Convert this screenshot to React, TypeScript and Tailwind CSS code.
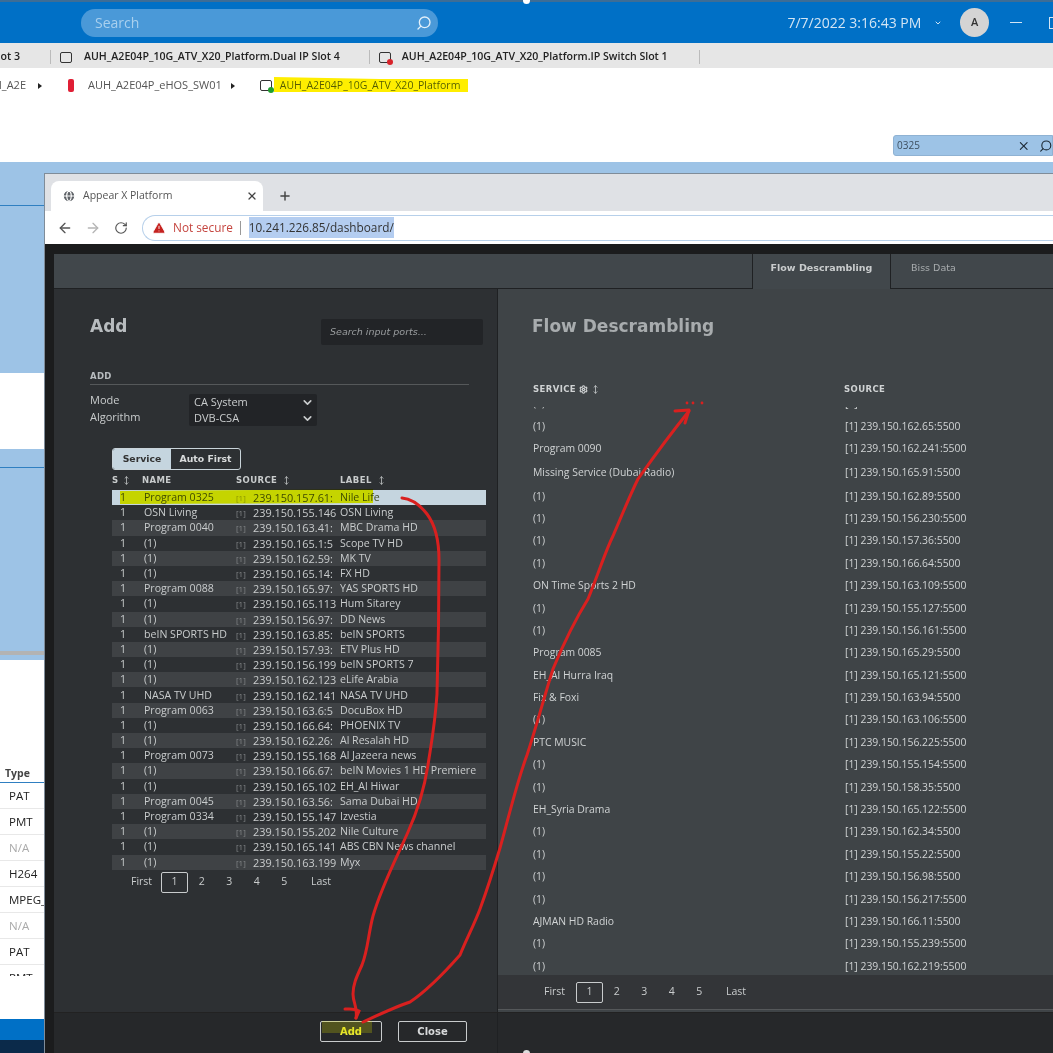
import React from "react";
import { ArrowLeft, ArrowRight, Globe, MoveVertical, Plus, RotateCw, Search, Settings, TriangleAlert, X, ChevronDown } from "lucide-react";

const leftRows = [
  ["Program 0325", "239.150.157.61:", "Nile Life"],
  ["OSN Living", "239.150.155.146", "OSN Living"],
  ["Program 0040", "239.150.163.41:", "MBC Drama HD"],
  ["(1)", "239.150.165.1:5", "Scope TV HD"],
  ["(1)", "239.150.162.59:", "MK TV"],
  ["(1)", "239.150.165.14:", "FX HD"],
  ["Program 0088", "239.150.165.97:", "YAS SPORTS HD"],
  ["(1)", "239.150.165.113", "Hum Sitarey"],
  ["(1)", "239.150.156.97:", "DD News"],
  ["beIN SPORTS HD", "239.150.163.85:", "beIN SPORTS"],
  ["(1)", "239.150.157.93:", "ETV Plus HD"],
  ["(1)", "239.150.156.199", "beIN SPORTS 7"],
  ["(1)", "239.150.162.123", "eLife Arabia"],
  ["NASA TV UHD", "239.150.162.141", "NASA TV UHD"],
  ["Program 0063", "239.150.163.6:5", "DocuBox HD"],
  ["(1)", "239.150.166.64:", "PHOENIX TV"],
  ["(1)", "239.150.162.26:", "Al Resalah HD"],
  ["Program 0073", "239.150.155.168", "Al Jazeera news"],
  ["(1)", "239.150.166.67:", "beIN Movies 1 HD Premiere"],
  ["(1)", "239.150.165.102", "EH_Al Hiwar"],
  ["Program 0045", "239.150.163.56:", "Sama Dubai HD"],
  ["Program 0334", "239.150.155.147", "Izvestia"],
  ["(1)", "239.150.155.202", "Nile Culture"],
  ["(1)", "239.150.165.141", "ABS CBN News channel"],
  ["(1)", "239.150.163.199", "Myx"],
];

const rightRows = [
  ["(1)", "163.43"],
  ["(1)", "162.65"],
  ["Program 0090", "162.241"],
  ["Missing Service (Dubai Radio)", "165.91"],
  ["(1)", "162.89"],
  ["(1)", "156.230"],
  ["(1)", "157.36"],
  ["(1)", "166.64"],
  ["ON Time Sports 2 HD", "163.109"],
  ["(1)", "155.127"],
  ["(1)", "156.161"],
  ["Program 0085", "165.29"],
  ["EH_Al Hurra Iraq", "165.121"],
  ["Fix & Foxi", "163.94"],
  ["(1)", "163.106"],
  ["PTC MUSIC", "156.225"],
  ["(1)", "155.154"],
  ["(1)", "158.35"],
  ["EH_Syria Drama", "165.122"],
  ["(1)", "162.34"],
  ["(1)", "155.22"],
  ["(1)", "156.98"],
  ["(1)", "156.217"],
  ["AJMAN HD Radio", "166.11"],
  ["(1)", "155.239"],
  ["(1)", "162.219"],
];

const typeRows = ["PAT", "PMT", "N/A", "H264", "MPEG_A", "N/A", "PAT"];

function Pager({ gaps, first }: { gaps: string; first: string }) {
  return (
    <div className={`flex items-center text-[10.5px] font-medium text-[#c9cccd] ${gaps}`}>
      <span className={first}>First</span>
      <span className="flex h-[21px] w-[27px] items-center justify-center rounded-[2px] border border-[#c9cccd]">1</span>
      <span className="w-[27.5px] text-center">2</span>
      <span className="w-[27.5px] text-center">3</span>
      <span className="w-[27.5px] text-center">4</span>
      <span className="w-[27.5px] text-center">5</span>
      <span className="ml-[13px]">Last</span>
    </div>
  );
}

function Device({ dot }: { dot?: string }) {
  return (
    <span className="relative inline-block h-[11px] w-[12px] shrink-0 rounded-[2px] border border-[#333]">
      {dot && <span className={`absolute -bottom-[3px] -right-[3px] h-[6px] w-[6px] rounded-full ${dot}`} />}
    </span>
  );
}

export default function App() {
  return (
    <div className="relative flex h-[1053px] w-[1053px] flex-col overflow-hidden bg-white font-['Open_Sans',sans-serif]">
      {/* Top bar */}
      <div className="flex h-[43px] shrink-0 items-center border-t-2 border-[#3d6d96] bg-[#0070c6]">
        <div className="ml-[81px] flex h-[28px] w-[358px] items-center justify-between rounded-full bg-[#4a99d8] pl-[14px] pr-[6px] text-[14px] text-[#a9d0ee]">
          <span>Search</span>
          <Search size={16} className="-scale-x-100 text-[#e3f0fa]" />
        </div>
        <span className="ml-[349px] w-[147px] text-[14px] text-[#d3e5f4]">7/7/2022 3:16:43 PM</span>
        <ChevronDown size={8} strokeWidth={3} className="text-[#d3e5f4]" />
        <span className="ml-[18px] flex h-[29px] w-[29px] items-center justify-center rounded-full bg-[#d4d4d4] text-[11px] font-semibold text-[#333]">A</span>
        <span className="ml-[21px] h-[1px] w-[12px] bg-[#d3e5f4]" />
        <span className="ml-[27px] h-[12px] w-[4px] border-y border-l border-[#d3e5f4]" />
      </div>

      {/* Tab strip */}
      <div className="flex h-[25px] shrink-0 items-center overflow-hidden bg-[#e6e6e6] pt-[3px] text-[10.6px] font-semibold text-[#222]">
        <span className="w-[50px] shrink-0 pr-[30px] text-right whitespace-nowrap">ot 3</span>
        <span className="h-[14px] w-px shrink-0 bg-[#bbb]" />
        <span className="ml-[9px] flex"><Device /></span>
        <span className="ml-[12px] whitespace-nowrap">AUH_A2E04P_10G_ATV_X20_Platform.Dual IP Slot 4</span>
        <span className="ml-[29px] h-[14px] w-px shrink-0 bg-[#bbb]" />
        <span className="ml-[9px] flex"><Device dot="bg-[#d8232a]" /></span>
        <span className="ml-[11px] whitespace-nowrap">AUH_A2E04P_10G_ATV_X20_Platform.IP Switch Slot 1</span>
        <span className="ml-[31px] h-[14px] w-px shrink-0 bg-[#bbb]" />
      </div>

      {/* Breadcrumb area */}
      <div className="flex h-[94px] shrink-0 flex-col bg-white">
        <div className="flex h-[35px] items-center text-[11px] text-[#555]">
          <span className="w-[26px] overflow-hidden whitespace-nowrap text-right [direction:rtl]">H_A2E</span>
          <span className="ml-[12px] h-0 w-0 border-y-[3px] border-l-[4px] border-y-transparent border-l-[#222]" />
          <span className="ml-[26px] h-[13px] w-[6px] rounded-[2px] bg-[#e01f35]" />
          <span className="ml-[14px] whitespace-nowrap">AUH_A2E04P_eHOS_SW01</span>
          <span className="ml-[9px] h-0 w-0 border-y-[3px] border-l-[4px] border-y-transparent border-l-[#222]" />
          <span className="ml-[25px] flex"><Device dot="bg-[#1e9e2e]" /></span>
          <span className="ml-[8px] whitespace-nowrap text-[10.5px] text-[#5a5a20]">AUH_A2E04P_10G_ATV_X20_Platform</span>
        </div>
        <div className="ml-[893px] mt-[32px] flex h-[21px] items-center rounded-l-[3px] border border-[#8fb2d3] bg-[#9dc3e6] pl-[3px] text-[10px] text-[#3d4f5f]">
          <span className="w-[125px]">0325</span>
          <X size={14} className="text-[#1d2a35]" />
          <Search size={14} className="ml-[8px] -scale-x-100 text-[#1d2a35]" />
        </div>
      </div>

      {/* Desktop lower */}
      <div className="flex min-h-0 flex-1 flex-col bg-[#9dc3e6]">
        <div className="h-[11px] shrink-0" />
        <div className="flex min-h-0 flex-1">
          {/* Underlying page, left sliver */}
          <div className="flex w-[44px] shrink-0 flex-col">
            <div className="h-[33px] shrink-0 border-b border-[#2f7fc1]" />
            <div className="h-[167px] shrink-0" />
            <div className="h-[76px] shrink-0 bg-white" />
            <div className="h-[19px] shrink-0 border-b border-[#2f7fc1]" />
            <div className="h-[183px] shrink-0" />
            <div className="h-[4px] shrink-0 bg-[#b3b3b3]" />
            <div className="h-[5px] shrink-0" />
            <div className="flex min-h-0 flex-1 flex-col bg-white text-[11.5px] text-[#222]">
              <div className="h-[123px] shrink-0 border-b border-[#2f7fc1] pl-[5px] pt-[106px] text-[10.5px] font-bold leading-[14px] text-[#444]">Type</div>
              {typeRows.map((t, i) => (
                <div key={i} className={`flex h-[26px] shrink-0 items-center overflow-hidden whitespace-nowrap border-b border-[#e8e8e8] pl-[9px] ${t === "N/A" ? "text-[#aaa]" : ""}`}>{t}</div>
              ))}
              <div className="h-[11px] shrink-0 overflow-hidden whitespace-nowrap pl-[9px] leading-[26px]">PMT</div>
              <div className="flex-1" />
              <div className="h-[21px] shrink-0 bg-[#0070c6]" />
              <div className="h-[13px] shrink-0 bg-[#0b2a4a]" />
            </div>
          </div>

          {/* Browser window */}
          <div className="flex min-w-0 flex-1 flex-col overflow-hidden border-l border-t border-[#7f8c99]">
            <div className="flex h-[37px] shrink-0 items-end bg-[#dfe1e5] pl-[6px]">
              <div className="flex h-[30px] w-[212px] items-center rounded-t-[8px] bg-white pl-[11px] text-[10.5px] text-[#555]">
                <Globe size={14} fill="#5f6368" className="text-white" />
                <span className="ml-[7px] w-[163px]">Appear X Platform</span>
                <X size={12} strokeWidth={2.5} className="text-[#444]" />
              </div>
              <Plus size={14} strokeWidth={2.5} className="mb-[8px] ml-[15px] text-[#444]" />
            </div>
            <div className="flex h-[33px] shrink-0 items-center bg-white pl-[12px]">
              <ArrowLeft size={16} className="text-[#555]" />
              <ArrowRight size={16} className="ml-[12px] text-[#b5b5b5]" />
              <RotateCw size={14} className="ml-[13px] text-[#555]" />
              <div className="ml-[14px] flex h-[26px] min-w-0 flex-1 items-center rounded-l-full border border-r-0 border-[#b7d0ea] pl-[9px] text-[11.8px] whitespace-nowrap">
                <TriangleAlert size={14} fill="#c5221f" stroke="#fff" strokeWidth={1.5} />
                <span className="ml-[7px] text-[#c5453f]">Not secure</span>
                <span className="ml-[7px] h-[14px] w-px bg-[#999]" />
                <span className="ml-[8px] bg-[#b4cdf0] py-[2px] text-[#333]">10.241.226.85/dashboard/</span>
              </div>
            </div>

            {/* Dark frame */}
            <div className="flex min-h-0 flex-1 flex-col bg-[#1b1c1d] pl-[9px] pt-[10px]">
              <div className="flex h-[35px] shrink-0 bg-[#41474b] text-[9.5px] font-bold">
                <div className="w-[698px] border-b border-[#1f2123]" />
                <div className="flex w-[139px] items-start justify-center border-l border-r border-[#1f2123] pt-[7px] text-[#c9cccd] font-['DejaVu_Sans',sans-serif]">Flow Descrambling</div>
                <div className="flex-1 border-b border-[#1f2123] pl-[20px] pt-[7px] font-normal text-[#a8acae] font-['DejaVu_Sans',sans-serif]">Biss Data</div>
              </div>

              <div className="flex min-h-0 flex-1">
                {/* Left panel */}
                <div className="flex w-[444px] shrink-0 flex-col border-r border-[#1f2123] bg-[#2d3033] text-[#c9cccd]">
                  <div className="flex h-[78px] shrink-0 pl-[36px]">
                    <h2 className="mt-[26px] w-[231px] text-[17px] leading-[22px] font-bold text-[#b8bcbf] font-['DejaVu_Sans',sans-serif]">Add</h2>
                    <div className="mt-[30px] flex h-[26px] w-[162px] items-center rounded-[2px] bg-[#222427] pl-[9px] pt-[1px] text-[9.5px] italic text-[#9a9d9f] font-['DejaVu_Sans',sans-serif]">Search input ports...</div>
                  </div>
                  <div className="ml-[36px] mr-[28px] h-[18px] border-b border-[#55585a] pt-[3px] text-[8.5px] font-bold leading-[12px] tracking-[0.3px] text-[#b8bcbf] font-['DejaVu_Sans',sans-serif]">ADD</div>
                  <div className="ml-[36px] mt-[8px] flex text-[11px] font-medium text-[#c9cccd]">
                    <div className="-mt-[2px] w-[99px] leading-[17px]">
                      <div>Mode</div>
                      <div>Algorithm</div>
                    </div>
                    <div className="mt-[1px] flex h-[32px] w-[128px] flex-col justify-center rounded-[2px] bg-[#222427] pl-[5px] pr-[3px] leading-[16px]">
                      <div className="flex items-center justify-between">CA System<ChevronDown size={13} strokeWidth={3} /></div>
                      <div className="flex items-center justify-between">DVB-CSA<ChevronDown size={13} strokeWidth={3} /></div>
                    </div>
                  </div>
                  <div className="ml-[58px] mt-[22px] flex h-[22px] w-[129px] shrink-0 overflow-hidden rounded-[3px] border border-[#c9d4da] text-[9.3px] font-bold font-['DejaVu_Sans',sans-serif]">
                    <div className="flex w-[58px] items-center justify-center bg-[#c5d5df] text-[#333]">Service</div>
                    <div className="flex flex-1 items-center justify-center text-[#d8dadb]">Auto First</div>
                  </div>
                  <div className="ml-[58px] mt-[3px] flex h-[15px] shrink-0 items-center text-[8.5px] font-bold tracking-[0.4px] text-[#c9cccd] font-['DejaVu_Sans',sans-serif]">
                    <span className="flex w-[30px] items-center gap-[3px]">S<MoveVertical size={9} /></span>
                    <span className="w-[94px]">NAME</span>
                    <span className="flex w-[104px] items-center gap-[5px]">SOURCE<MoveVertical size={9} /></span>
                    <span className="flex items-center gap-[5px]">LABEL<MoveVertical size={9} /></span>
                  </div>
                  <div className="ml-[58px] mt-[2px] w-[374px] shrink-0 text-[10.6px] font-medium">
                    {leftRows.map((r, i) => (
                      <div key={i} className={`flex h-[15.2px] items-center whitespace-nowrap leading-[15px] ${i === 0 ? "bg-[#c5d5df] text-[#3f4a22]" : i % 2 === 0 ? "bg-[#3f4245]" : ""}`}>
                        <span className="w-[32px] shrink-0 pl-[8px]">1</span>
                        <span className="w-[92px] shrink-0">{r[0]}</span>
                        <span className={`w-[17px] shrink-0 text-[8px] ${i === 0 ? "text-[#8a9440]" : "text-[#85888a]"}`}>[1]</span>
                        <span className="w-[87px] shrink-0 overflow-hidden text-[10.9px]">{r[1]}</span>
                        <span>{r[2]}</span>
                      </div>
                    ))}
                  </div>
                  <Pager gaps="ml-[77px] mt-[2px]" first="w-[30px]" />
                </div>

                {/* Right panel */}
                <div className="flex min-w-0 flex-1 flex-col bg-[#3f4447] text-[#d0d3d4]">
                  <div className="h-[78px] shrink-0 pl-[34px] pt-[26px] text-[17px] leading-[22px] font-bold text-[#a8acae] font-['DejaVu_Sans',sans-serif] whitespace-nowrap">Flow Descrambling</div>
                  <div className="flex h-[40px] shrink-0 items-center pt-[4px] pl-[35px] text-[8.5px] font-bold tracking-[0.4px] text-[#d0d3d4] font-['DejaVu_Sans',sans-serif]">
                    <span className="flex w-[311px] items-center gap-[3px]">SERVICE<Settings size={9} strokeWidth={3} /><MoveVertical size={9} /></span>
                    <span>SOURCE</span>
                  </div>
                  <div className="h-[568px] shrink-0 overflow-hidden text-[10.4px] font-medium">
                    <div className="-mt-[14px]">
                      {rightRows.map((r, i) => (
                        <div key={i} className={`flex items-center pl-[35px] whitespace-nowrap ${i === 3 ? "h-[25px]" : "h-[22.4px]"}`}>
                          <span className="w-[312px] shrink-0">{r[0]}</span>
                          <span>[1] 239.150.{r[1]}:5500</span>
                        </div>
                      ))}
                    </div>
                  </div>
                  <div className="flex h-[35px] shrink-0 items-center border-b border-[#55585a] bg-[#333538] pl-[46px]">
                    <Pager gaps="" first="w-[32px]" />
                  </div>
                </div>
              </div>

              {/* Footer */}
              <div className="flex h-[41px] shrink-0 border-t border-[#222] bg-[#26282a]">
                <div className="flex w-[444px] shrink-0 items-start gap-[16px] border-r border-[#1f2123] pl-[266px] pt-[8px] text-[10px] font-bold font-['DejaVu_Sans',sans-serif]">
                  <span className="flex h-[21px] w-[62px] items-center justify-center rounded-[2px] border border-[#c9cccd] text-[#e8e832]">Add</span>
                  <span className="flex h-[21px] w-[69px] items-center justify-center rounded-[2px] border border-[#c9cccd] text-[#d8dadb]">Close</span>
                </div>
                <div className="flex-1" />
              </div>
            </div>
          </div>
        </div>
      </div>

      {/* Hand-drawn annotations over the screenshot */}
      <svg className="pointer-events-none absolute left-0 top-0" width="1053" height="1053" viewBox="0 0 1053 1053" fill="none">
        <path d="M274 77 L380 79 L468 79 L468 92 L274 92 Z" fill="#ffee00" style={{ mixBlendMode: "darken" }} />
        <path d="M120 491 L373 489 L373 503 L120 504 Z" fill="#c8d400" style={{ mixBlendMode: "darken" }} />
        <path d="M322 1021 L372 1021 L372 1033 L322 1033 Z" fill="#d8d800" opacity="0.25" />
        <path d="M402 498 C412 499 420 505 427 514 C436 526 439 540 439 560 C439 620 438 660 437 694 C435 725 431 745 428 765 C424 790 418 810 408 832 C398 855 382 885 373 916 C368 935 368 950 362 965 C356 978 353 985 353 994 C353 1003 358 1008 356 1018" stroke="#d9201f" strokeWidth="3" strokeLinecap="round" />
        <path d="M345 1009 C350 1009 354 1008 359 1011 L356 1018" stroke="#d9201f" strokeWidth="3" strokeLinecap="round" />
        <path d="M363 1022 C378 1015 395 1007 410 1002 C428 990 445 972 460 955 C467 938 474 925 480 909 C487 890 494 868 500 848 C508 820 516 785 527 755 C536 728 545 694 553 669 C563 645 575 620 588 599 C598 575 605 552 613 536 C622 515 630 495 638 479 C655 455 672 432 689 411" stroke="#d9201f" strokeWidth="3" strokeLinecap="round" />
        <path d="M675 411 L689 410 L685 423" stroke="#d9201f" strokeWidth="3" strokeLinecap="round" strokeLinejoin="round" />
        <circle cx="687" cy="403" r="1.4" fill="#d9201f" />
        <circle cx="693" cy="403" r="1.4" fill="#d9201f" />
        <circle cx="702" cy="403" r="1.4" fill="#d9201f" />
      </svg>
      <span className="absolute left-[523px] -top-[3px] h-[7px] w-[7px] rounded-full bg-white" />
      <span className="absolute left-[523px] top-[1050px] h-[7px] w-[7px] rounded-full bg-[#ddd]" />
    </div>
  );
}
